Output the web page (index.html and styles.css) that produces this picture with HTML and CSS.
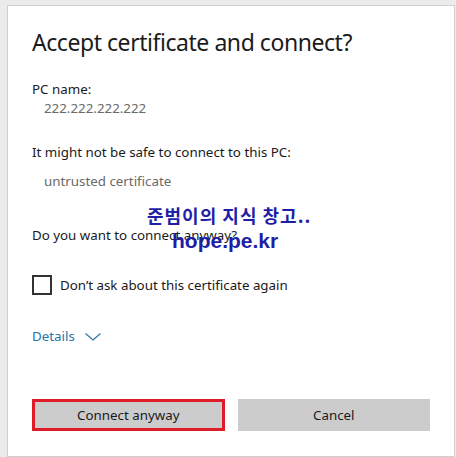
FILE: index.html
```html
<!DOCTYPE html>
<html>
<head>
<meta charset="utf-8">
<link rel="stylesheet" href="styles.css">
</head>
<body>
<div class="dialog">
  <h1 class="title">Accept certificate and connect?</h1>
  <div class="label pc-label">PC name:</div>
  <div class="value">222.222.222.222</div>
  <div class="label warn-label">It might not be safe to connect to this PC:</div>
  <div class="value reason">untrusted certificate</div>
  <div class="label ask-label">Do you want to connect anyway?</div>
  <label class="check-row">
    <span class="checkbox"></span>
    <span class="check-text">Don’t ask about this certificate again</span>
  </label>
  <div class="details">
    <span>Details</span>
    <svg class="chevron" width="16" height="8" viewBox="0 0 16 8"><polyline points="0.5,0.5 8,7 15.5,0.5" fill="none" stroke="#2a74a6" stroke-width="1.1"/></svg>
  </div>
  <div class="buttons">
    <button class="btn btn-primary">Connect anyway</button>
    <button class="btn">Cancel</button>
  </div>
  <div class="watermark">
    <div class="wm-ko">준범이의 지식 창고..</div>
    <div class="wm-url">hope.pe.kr</div>
  </div>
</div>
</body>
</html>
```
FILE: styles.css
```css
html, body {
  margin: 0;
  padding: 0;
}
body {
  background: #ebebeb;
  width: 456px;
  height: 457px;
  overflow: hidden;
  font-family: "Noto Sans", "Open Sans", sans-serif;
}
.dialog {
  position: relative;
  box-sizing: border-box;
  margin: 5px 0 0 7px;
  width: 448px;
  height: 452px;
  background: #ffffff;
  border: 1px solid #cfcfcf;
  padding: 20px 24px 0 24px;
  color: #1a1a1a;
}
.title {
  margin: 0;
  font-size: 23px;
  line-height: 32px;
  font-weight: 400;
  color: #1b1b1b;
  letter-spacing: -0.45px;
}
.label, .value {
  font-size: 13.33px;
  line-height: 19px;
}
.value {
  color: #6a6a6a;
  padding-left: 12px;
}
.pc-label { margin-top: 22px; }
.warn-label { margin-top: 25px; }
.reason { margin-top: 10px; }
.ask-label { margin-top: 35px; }
.check-row {
  display: flex;
  align-items: center;
  gap: 8px;
  margin-top: 30px;
  height: 20px;
  font-size: 13.33px;
  line-height: 20px;
}
.checkbox {
  box-sizing: border-box;
  width: 20px;
  height: 20px;
  border: 2px solid #333333;
  flex: none;
}
.details {
  display: flex;
  align-items: center;
  gap: 10px;
  margin-top: 32px;
  font-size: 13.33px;
  line-height: 19px;
  color: #2a74a6;
}
.chevron {
  display: block;
  margin-top: 1px;
}
.buttons {
  display: grid;
  grid-template-columns: 1fr 1fr;
  gap: 13px;
  margin-top: 53px;
}
.btn {
  box-sizing: border-box;
  height: 32px;
  border: none;
  background: #cccccc;
  font-family: inherit;
  font-size: 13.33px;
  color: #1a1a1a;
  padding: 0;
}
.btn-primary {
  border: 3px solid #e01c26;
}
.watermark {
  position: absolute;
  left: 139px;
  top: 197px;
  color: #1e1ea6;
  font-weight: 700;
  pointer-events: none;
}
.wm-ko {
  font-family: "Noto Sans CJK KR", sans-serif;
  font-size: 18px;
  line-height: 24px;
  letter-spacing: 1px;
}
.wm-url {
  font-family: "Liberation Sans", sans-serif;
  font-size: 21px;
  line-height: 24px;
  margin-left: 25px;
  margin-top: 2px;
}
```
